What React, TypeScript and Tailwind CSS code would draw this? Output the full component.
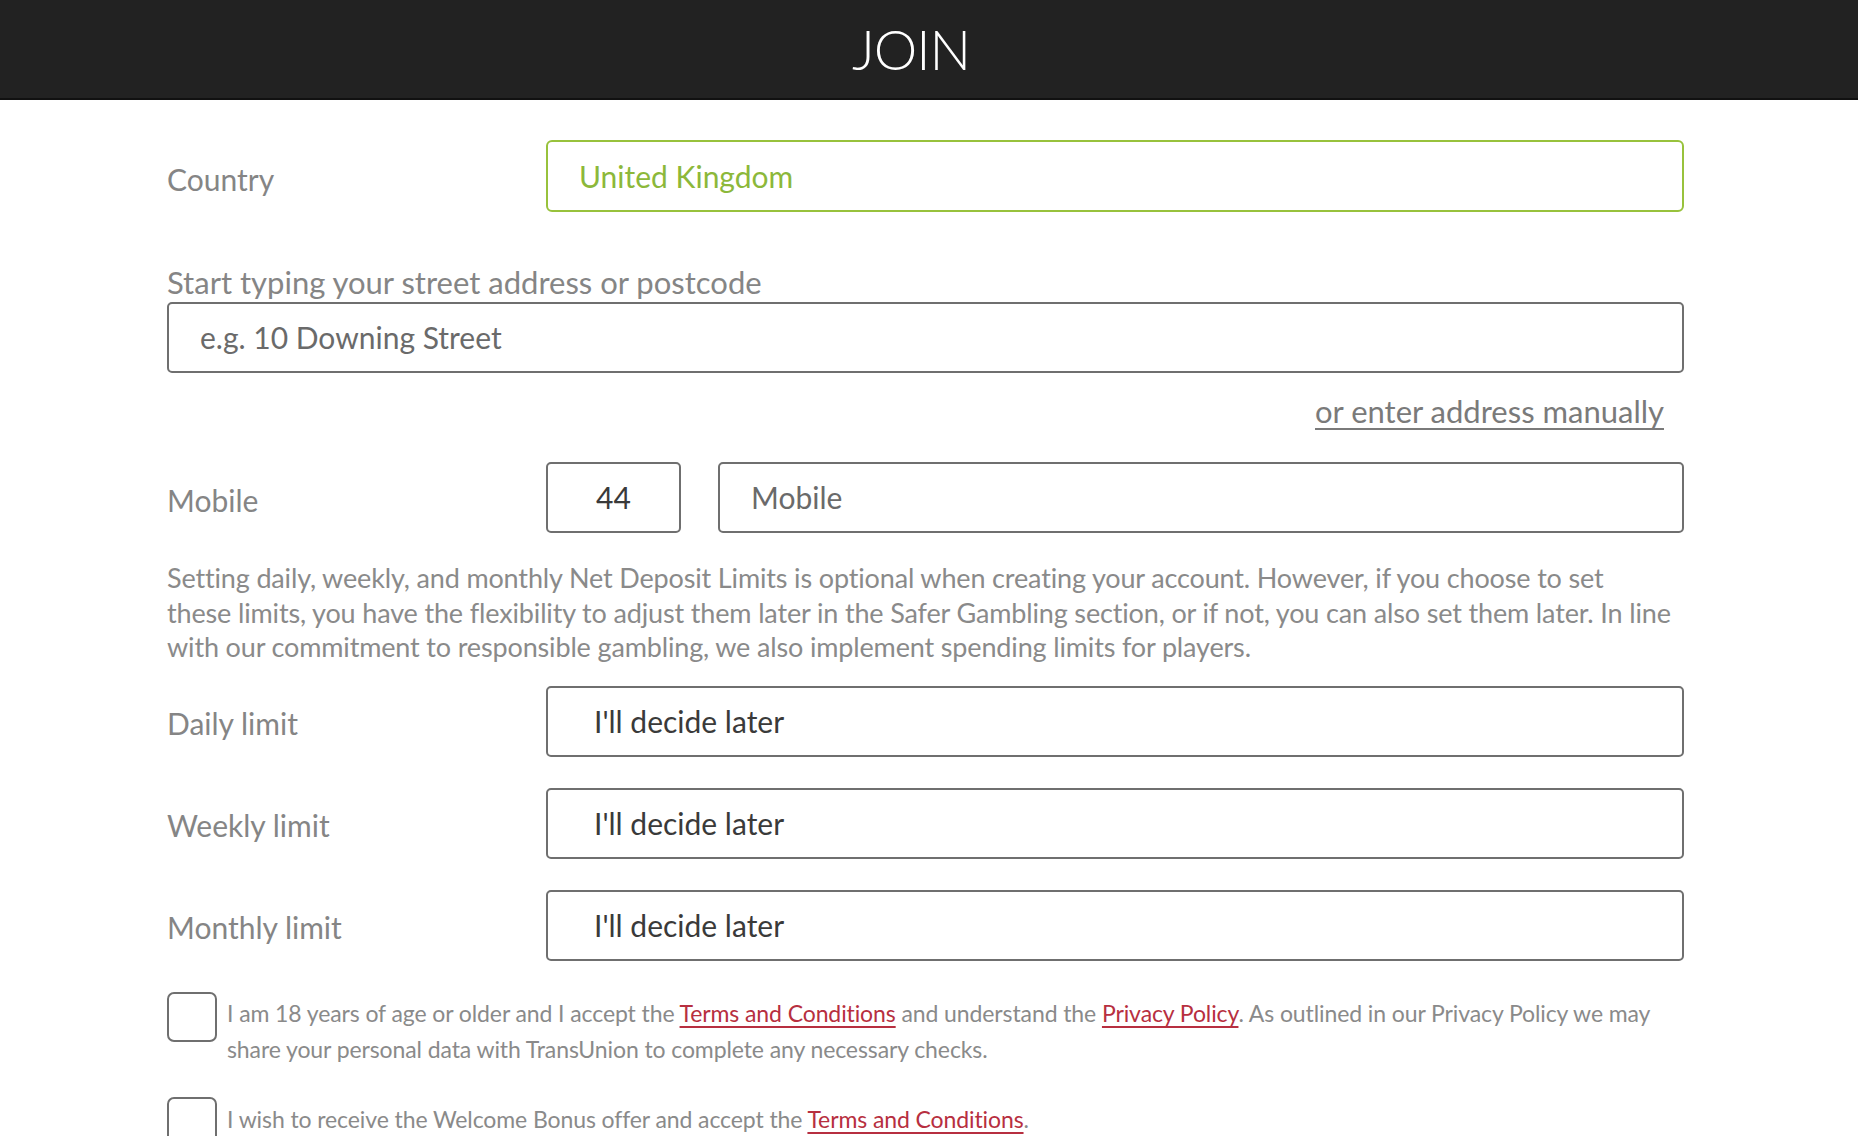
import React from "react";

const font = { fontFamily: "Lato, 'Liberation Sans', sans-serif" };

function LimitRow({ label }: { label: string }) {
  return (
    <div className="flex items-center h-[71px]">
      <div className="w-[379px] text-[30px] text-[#858585] pt-[4px]">{label}</div>
      <div className="flex-1 h-full border-2 border-[#6f6f6f] rounded-[5px] flex items-center pl-[46px] text-[30px] text-[#3a3a3a]">
        I'll decide later
      </div>
    </div>
  );
}

export default function App() {
  return (
    <div className="min-h-screen bg-white" style={font}>
      <header className="h-[100px] bg-[#222222] border-b-2 border-[#111111] flex items-center justify-center pr-[36px]">
        <h1 className="text-[55px] font-light text-white tracking-[-1px] leading-none">JOIN</h1>
      </header>

      <main className="pl-[167px] pr-[174px] pt-[40px]">
        <div className="flex items-center h-[72px]">
          <div className="w-[379px] text-[30px] text-[#858585] pt-[6px]">Country</div>
          <div className="flex-1 h-full border-2 border-[#98c23c] rounded-[6px] flex items-center pl-[31px] text-[30px] text-[#8cb83a]">
            United Kingdom
          </div>
        </div>

        <div className="mt-[52px] text-[31px] text-[#858585] leading-[36px]">
          Start typing your street address or postcode
        </div>
        <div className="mt-[2px] h-[71px] border-2 border-[#6f6f6f] rounded-[5px] flex items-center pl-[31px] text-[30px] text-[#6a6a6a]">
          e.g. 10 Downing Street
        </div>

        <div className="flex justify-end pr-[20px] mt-[20px]">
          <a href="#" className="text-[31px] text-[#7a7a7a] underline underline-offset-[5px] decoration-2 leading-[36px]">
            or enter address manually
          </a>
        </div>

        <div className="flex items-center h-[71px] mt-[33px]">
          <div className="w-[379px] text-[30px] text-[#858585] pt-[6px]">Mobile</div>
          <div className="w-[135px] h-full border-2 border-[#6f6f6f] rounded-[5px] flex items-center justify-center text-[30px] text-[#3a3a3a]">
            44
          </div>
          <div className="ml-[37px] flex-1 h-full border-2 border-[#6f6f6f] rounded-[5px] flex items-center pl-[31px] text-[30px] text-[#6a6a6a]">
            Mobile
          </div>
        </div>

        <p className="mt-[28px] text-[27px] leading-[34.5px] text-[#8a8a8a] tracking-[-0.15px]">
          Setting daily, weekly, and monthly Net Deposit Limits is optional when creating your account. However, if you choose to set
          <br />
          these limits, you have the flexibility to adjust them later in the Safer Gambling section, or if not, you can also set them later. In line
          <br />
          with our commitment to responsible gambling, we also implement spending limits for players.
        </p>

        <div className="mt-[21px] flex flex-col gap-[31px]">
          <LimitRow label="Daily limit" />
          <LimitRow label="Weekly limit" />
          <LimitRow label="Monthly limit" />
        </div>

        <div className="mt-[31px] flex items-start">
          <div className="w-[50px] h-[50px] shrink-0 border-2 border-[#6f6f6f] rounded-[7px]" />
          <p className="ml-[10px] text-[23px] leading-[36px] text-[#8a8a8a] pt-[3px] pr-[16px] tracking-[-0.1px]">
            I am 18 years of age or older and I accept the{" "}
            <a href="#" className="text-[#b72f40] underline underline-offset-[4px]">Terms and Conditions</a> and understand the{" "}
            <a href="#" className="text-[#b72f40] underline underline-offset-[4px]">Privacy Policy</a>. As outlined in our Privacy Policy we may share your personal data with TransUnion to complete any necessary checks.
          </p>
        </div>

        <div className="mt-[30px] flex items-start">
          <div className="w-[50px] h-[50px] shrink-0 border-2 border-[#6f6f6f] rounded-[7px]" />
          <p className="ml-[10px] text-[23px] leading-[36px] text-[#8a8a8a] pt-[4px] tracking-[-0.1px]">
            I wish to receive the Welcome Bonus offer and accept the{" "}
            <a href="#" className="text-[#b72f40] underline underline-offset-[4px]">Terms and Conditions</a>.
          </p>
        </div>
      </main>
    </div>
  );
}
